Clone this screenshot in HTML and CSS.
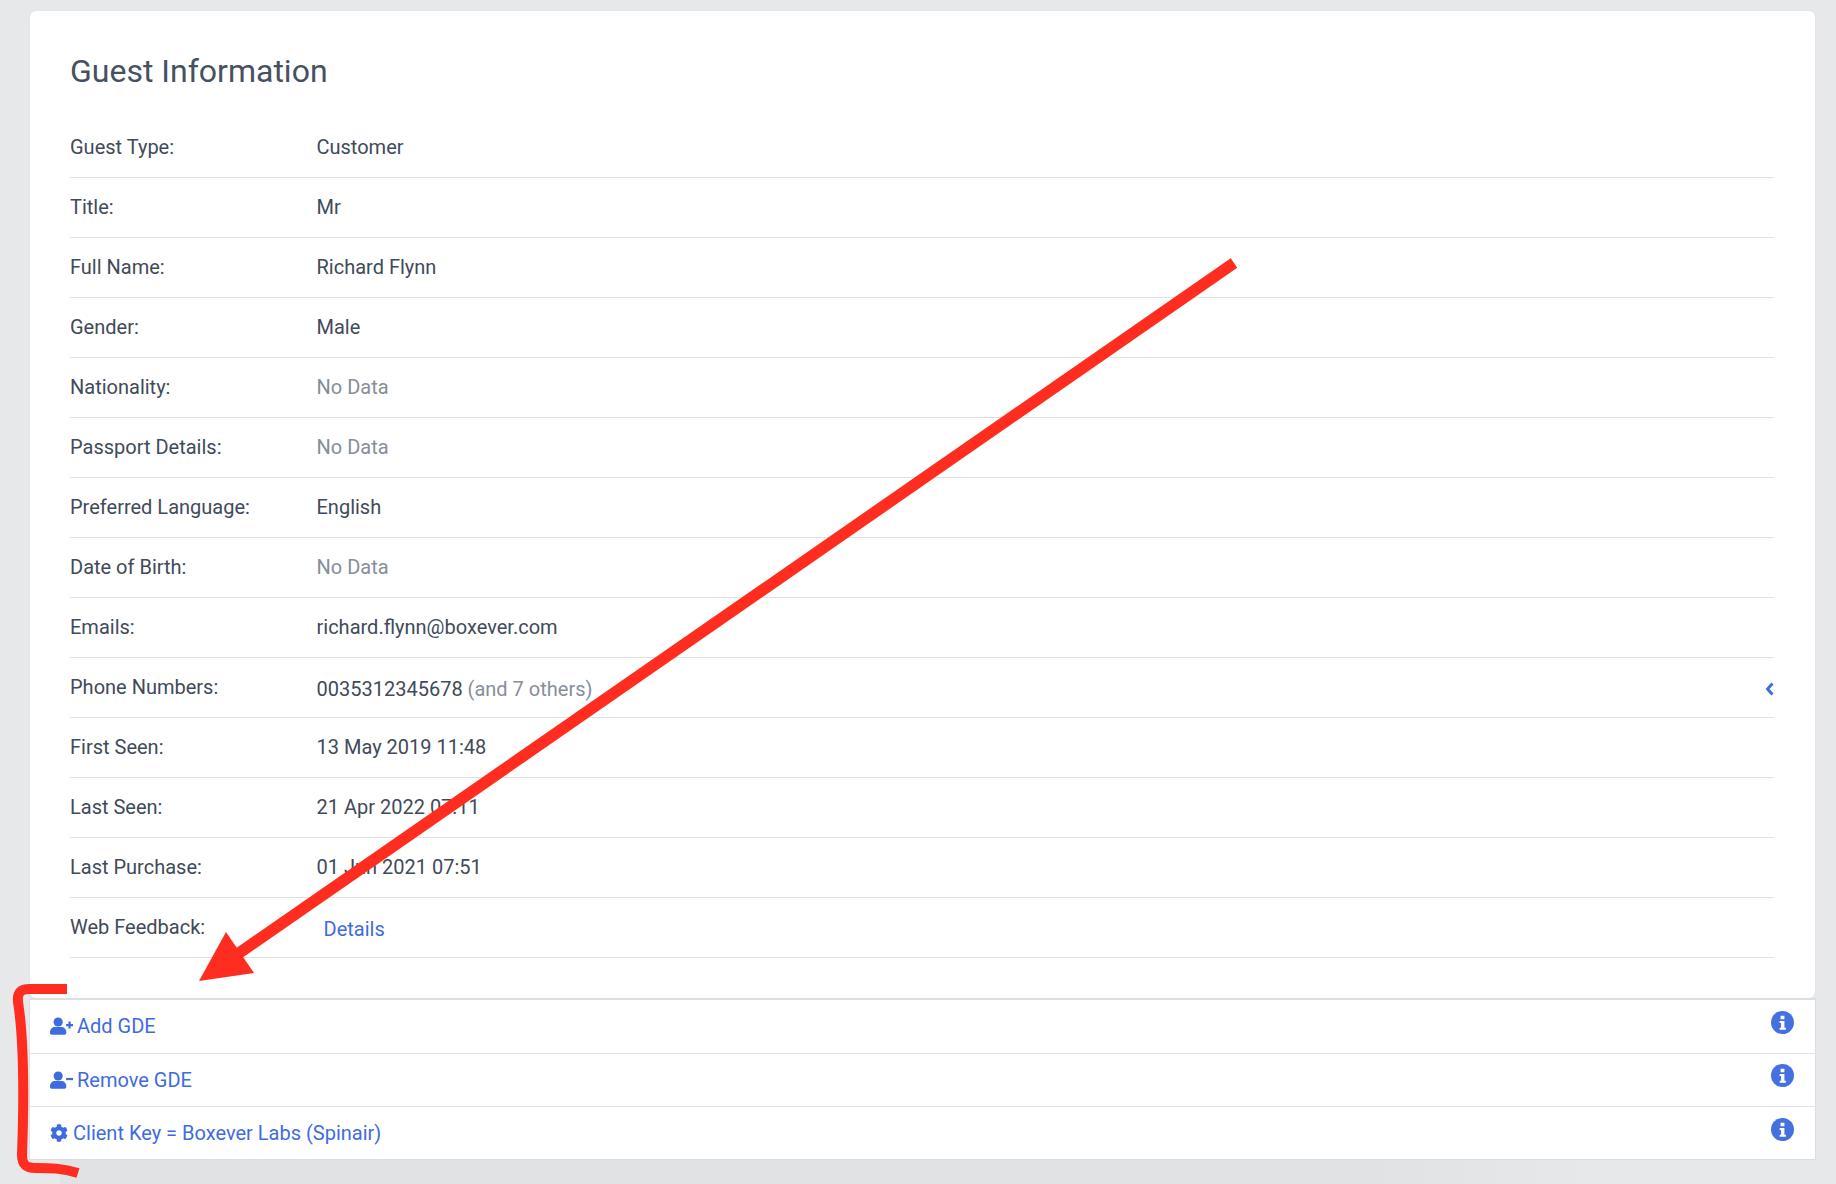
FILE: index.html
```html
<!DOCTYPE html>
<html lang="en">
<head>
<meta charset="utf-8">
<title>Guest Information</title>
<link rel="stylesheet" href="styles.css">
</head>
<body>
<main class="page">
  <section class="card">
    <h1 class="card-title">Guest Information</h1>
    <dl class="info">
      <div class="row"><dt>Guest Type:</dt><dd>Customer</dd></div>
      <div class="row"><dt>Title:</dt><dd>Mr</dd></div>
      <div class="row"><dt>Full Name:</dt><dd>Richard Flynn</dd></div>
      <div class="row"><dt>Gender:</dt><dd>Male</dd></div>
      <div class="row"><dt>Nationality:</dt><dd class="muted">No Data</dd></div>
      <div class="row"><dt>Passport Details:</dt><dd class="muted">No Data</dd></div>
      <div class="row"><dt>Preferred Language:</dt><dd>English</dd></div>
      <div class="row"><dt>Date of Birth:</dt><dd class="muted">No Data</dd></div>
      <div class="row"><dt>Emails:</dt><dd>richard.flynn@boxever.com</dd></div>
      <div class="row"><dt>Phone Numbers:</dt><dd class="phone">0035312345678 <span class="muted">(and 7 others)</span></dd>
        <svg class="chevron" viewBox="0 0 10 14"><path d="M7.5 1.5 2.500 7l5 5.500" fill="none" stroke="currentColor" stroke-width="2.800"/></svg>
      </div>
      <div class="row"><dt>First Seen:</dt><dd>13 May 2019 11:48</dd></div>
      <div class="row"><dt>Last Seen:</dt><dd>21 Apr 2022 07:11</dd></div>
      <div class="row"><dt>Last Purchase:</dt><dd>01 Jun 2021 07:51</dd></div>
      <div class="row"><dt>Web Feedback:</dt><dd class="link-cell"><a href="#">Details</a></dd></div>
    </dl>
  </section>
  <ul class="actions">
    <li class="action">
      <a href="#" class="action-link">
        <svg class="ico-user" viewBox="0 0 24 18"><circle cx="8.500" cy="4.800" r="4.800" fill="currentColor"/><path d="M0 15.500c0-3.400 2.500-5.500 5.200-5.500h6.600c2.700 0 5.200 2.100 5.200 5.500v.7c0 1-.8 1.800-1.800 1.800H1.800C.8 18 0 17.200 0 16.200z" fill="currentColor"/><path d="M16.800 8h7.200M20.400 4.400v7.200" stroke="currentColor" stroke-width="2.300"/></svg>
        Add GDE
      </a>
      <svg class="ico-info" viewBox="0 0 24 24"><circle cx="12" cy="12" r="12" fill="currentColor"/><path d="M10 5h4v3.500h-4zM9 10.500h5v7h1.500v2h-6.500v-2H10.500v-5H9z" fill="#fff"/></svg>
    </li>
    <li class="action">
      <a href="#" class="action-link">
        <svg class="ico-user" viewBox="0 0 24 18"><circle cx="8.500" cy="4.800" r="4.800" fill="currentColor"/><path d="M0 15.500c0-3.400 2.500-5.500 5.200-5.500h6.600c2.700 0 5.200 2.100 5.200 5.500v.7c0 1-.8 1.800-1.800 1.800H1.800C.8 18 0 17.200 0 16.200z" fill="currentColor"/><path d="M16.800 8h7.200" stroke="currentColor" stroke-width="2.300"/></svg>
        Remove GDE
      </a>
      <svg class="ico-info" viewBox="0 0 24 24"><circle cx="12" cy="12" r="12" fill="currentColor"/><path d="M10 5h4v3.500h-4zM9 10.500h5v7h1.500v2h-6.500v-2H10.500v-5H9z" fill="#fff"/></svg>
    </li>
    <li class="action">
      <a href="#" class="action-link">
        <svg class="ico-gear" viewBox="0 0 512 512"><path fill="currentColor" d="M487.400 315.700l-42.600-24.600c4.300-23.200 4.300-47 0-70.200l42.600-24.600c4.900-2.800 7.100-8.600 5.500-14-11.100-35.600-30-67.800-54.700-94.600-3.800-4.100-10-5.100-14.800-2.300L380.800 110c-17.900-15.400-38.500-27.300-60.800-35.100V25.800c0-5.600-3.900-10.500-9.400-11.700-36.700-8.200-74.300-7.800-109.200 0-5.500 1.200-9.400 6.100-9.400 11.700V75c-22.200 7.900-42.800 19.800-60.800 35.100L88.700 85.500c-4.900-2.800-11-1.900-14.800 2.300-24.700 26.700-43.600 58.900-54.700 94.600-1.700 5.400.6 11.200 5.500 14L67.300 221c-4.300 23.200-4.300 47 0 70.200l-42.600 24.600c-4.900 2.800-7.100 8.600-5.500 14 11.100 35.600 30 67.800 54.700 94.600 3.800 4.100 10 5.100 14.800 2.300l42.600-24.600c17.900 15.400 38.500 27.300 60.800 35.100v49.200c0 5.600 3.900 10.500 9.400 11.700 36.700 8.200 74.300 7.800 109.200 0 5.500-1.200 9.400-6.100 9.400-11.700v-49.200c22.200-7.900 42.800-19.800 60.800-35.100l42.600 24.600c4.900 2.800 11 1.900 14.800-2.300 24.700-26.700 43.600-58.900 54.700-94.600 1.500-5.500-.7-11.300-5.600-14.100zM256 336c-44.100 0-80-35.900-80-80s35.900-80 80-80 80 35.900 80 80-35.900 80-80 80z"/></svg>
        Client Key = Boxever Labs (Spinair)
      </a>
      <svg class="ico-info" viewBox="0 0 24 24"><circle cx="12" cy="12" r="12" fill="currentColor"/><path d="M10 5h4v3.500h-4zM9 10.500h5v7h1.500v2h-6.500v-2H10.500v-5H9z" fill="#fff"/></svg>
    </li>
  </ul>
  <div class="bottom-shade"></div>
  <svg class="annotation" viewBox="0 0 1836 1184">
    <path class="ann-arrow" d="M1234 263 232 958"/>
    <path class="ann-fill" d="M199 981 226 932 254 973z"/>
    <path class="ann-line" d="M67 989H30C21 989 17 992 18 1002 24 1040 24 1100 22 1155 22 1165 26 1168 36 1168 50 1168 62 1168 78 1173"/>
  </svg>
</main>
</body>
</html>
```

FILE: styles.css
```css
* { box-sizing: border-box; }
html, body { margin: 0; height: 100%; }
body {
  background: #e6e8ea;
  font-family: Roboto, "Liberation Sans", sans-serif;
  color: #3f4a5a;
  font-size: 20px;
}
.page { position: relative; width: 1836px; height: 1184px; padding: 11px 21px 0 30px; overflow: hidden; }
.card {
  height: 987px;
  background: #fff;
  border-radius: 6px;
  padding: 0 41px 0 40px;
  box-shadow: 0 0 1px #d4d6d8;
}
.card-title {
  margin: 0;
  padding-top: 39px;
  height: 107px;
  font-size: 32px;
  line-height: 42px;
  font-weight: 400;
  color: #465160;
}
.info { margin: 0; }
.row {
  display: flex;
  align-items: center;
  height: 60px;
  padding-bottom: 2px;
  border-bottom: 1.500px solid #dfe1e3;
}
.row dt { width: 246.500px; flex: none; }
.row dd { margin: 0; flex: 1; }
.muted { color: #868e99; }
.phone { padding-top: 5px; }
.link-cell { padding: 5px 0 0 7px; }
a { color: #3f6be0; text-decoration: none; }
.chevron { width: 10px; height: 14px; color: #4169dc; flex: none; margin: 4px -1px 0 0; }
.actions {
  list-style: none;
  margin: 0;
  padding: 0;
  background: #fff;
  border-top: 2px solid #dcdedf;
  border-bottom: 1px solid #dcdedf;
  box-shadow: 1px 0 0 #dcdedf, -1px 0 0 #dcdedf;
}
.action {
  display: flex;
  justify-content: space-between;
  padding: 0 21.500px 0 20px;
  height: 53px;
  border-bottom: 1.500px solid #e0e2e4;
  align-items: center;
}
.action:first-child { height: 54px; }
.action:last-child { height: 52px; border-bottom: 0; }
.action:last-child .action-link { margin-top: 0; }
.action:last-child .ico-info { margin-top: -7px; }
.action-link { display: flex; align-items: center; gap: 5px; color: #3f6be0; margin-top: -1px; }
.ico-user { width: 23px; height: 18px; margin-right: -1px; }
.ico-gear { width: 18px; height: 18px; }
.ico-info { width: 23px; height: 23px; color: #4570df; margin-top: -9px; }
.bottom-shade {
  height: 26px;
  margin: 0 220px 0 30px;
  background: linear-gradient(to right, #e1e2e4 85%, #e6e8ea);
}
.annotation { position: absolute; left: 0; top: 0; width: 1836px; height: 1184px; pointer-events: none; }
.ann-arrow { fill: none; stroke: #ff2d20; stroke-width: 11.500; }
.ann-line { fill: none; stroke: #ff2d20; stroke-width: 10; }
.ann-fill { fill: #ff2d20; }
```
